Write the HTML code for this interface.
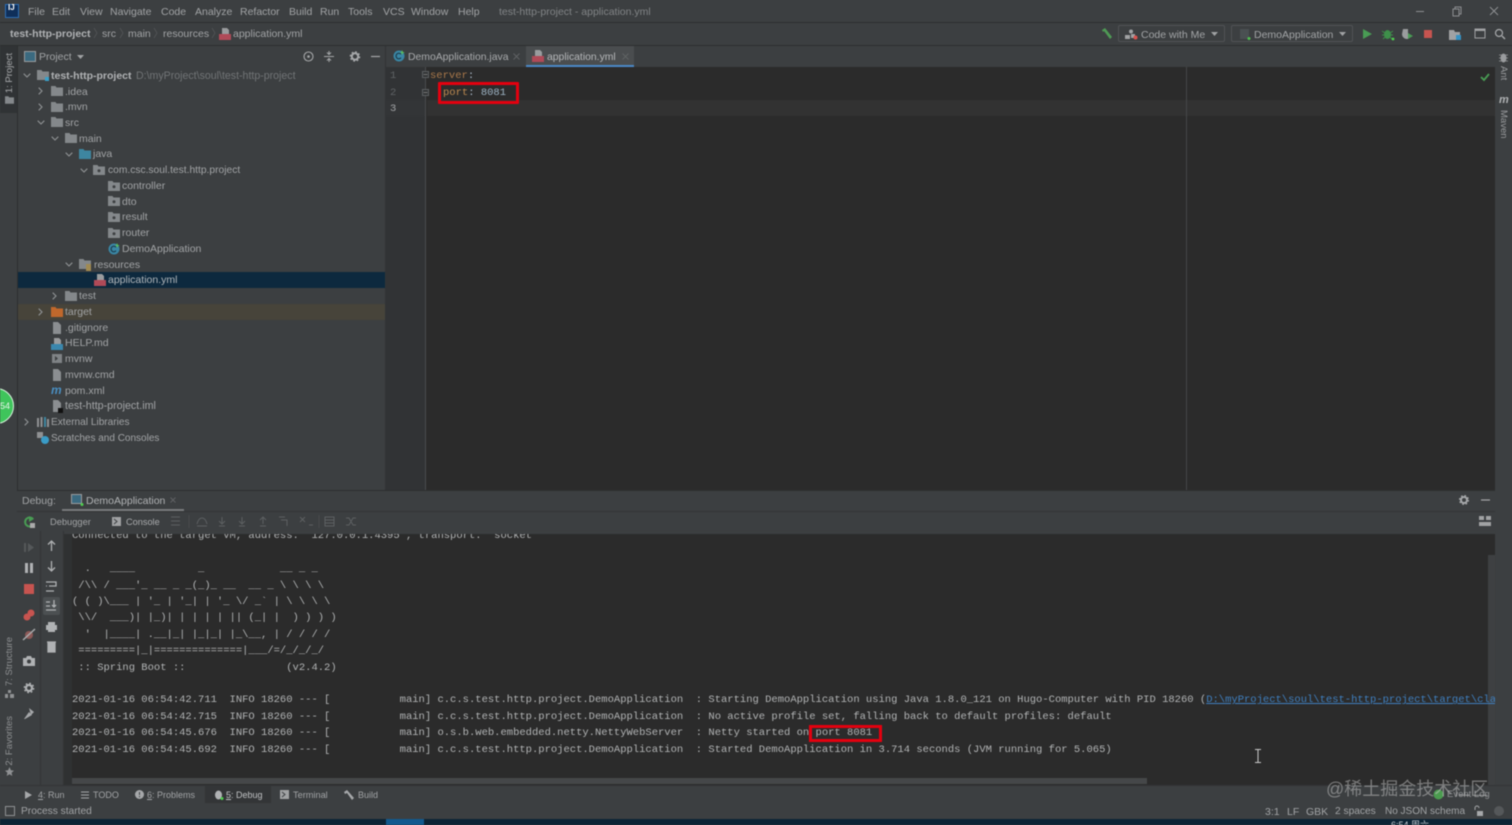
<!DOCTYPE html>
<html><head><meta charset="utf-8"><style>
html,body{margin:0;padding:0;width:1512px;height:825px;overflow:hidden;background:#3c3f41}
body{position:relative;font:10.5px/16px "Liberation Sans","Noto Sans CJK SC",sans-serif;color:#a2a4a6}
#w{position:absolute;left:0;top:0;width:1512px;height:825px;overflow:hidden;filter:blur(.4px)}
.a,.t{position:absolute}
.t{white-space:pre;margin-top:1px}
.v{position:absolute;writing-mode:vertical-rl;transform:rotate(180deg);white-space:pre;line-height:14px;font-size:9.5px}
.m{font-family:"Liberation Mono",monospace}
.b{font-size:9px}
svg{position:absolute;overflow:visible}
.ln{position:absolute;background:#2d2f30}
</style></head><body><div id="w">
<svg width="0" height="0" style="position:absolute"><defs>
<symbol id="f" viewBox="0 0 12 10"><path d="M0 0h4.500l1 1.500H12V10H0z" fill="#84888b"/></symbol>
<symbol id="p" viewBox="0 0 12 10"><path d="M0 0h4.500l1 1.500H12V10H0z" fill="#84888b"/><circle cx="6" cy="5.700" r="1.500" fill="#3c3f41"/></symbol>
<symbol id="o" viewBox="0 0 8 5"><path d="M.7.7 4 4 7.300.7" fill="none" stroke="#8f9294" stroke-width="1.100"/></symbol>
<symbol id="c" viewBox="0 0 5 8"><path d="M.7.7 4 4 .7 7.300" fill="none" stroke="#8f9294" stroke-width="1.100"/></symbol>
<symbol id="d" viewBox="0 0 10 12"><path d="M1 0h5l3 3v9H1z" fill="#8b8e91"/></symbol>
<symbol id="y" viewBox="0 0 12 12"><path d="M3 0h5l2 2v4H3z" fill="#9a9c9e"/><rect y="6" width="12" height="6" fill="#b04a58"/></symbol>
<symbol id="j" viewBox="0 0 12 12"><circle cx="6" cy="6" r="5.500" fill="#3a87a5"/><path d="M8 4.200A2.800 2.800 0 1 0 8 7.800" fill="none" stroke="#1d3c4c" stroke-width="1.200"/><path d="M9 0l1 2 2 .5-2 .5-1 2-.5-2-2-.5 2-.5z" fill="#5bc25b"/></symbol>
</defs></svg>

<!-- title bar -->
<div class="ln" style="left:0;top:22px;width:1512px;height:1px"></div>
<div class="a" style="left:5px;top:4px;width:14px;height:14px;background:#0f2f5a;border:1px solid #2d6fb7;box-sizing:border-box"></div>
<div class="t" style="left:8px;top:1px;font:bold 8px/12px 'Liberation Sans',sans-serif;color:#fff">IJ</div>
<div class="t" style="left:28px;top:3px">File</div><div class="t" style="left:52px;top:3px">Edit</div><div class="t" style="left:80px;top:3px">View</div><div class="t" style="left:110px;top:3px">Navigate</div><div class="t" style="left:161px;top:3px">Code</div><div class="t" style="left:195px;top:3px">Analyze</div><div class="t" style="left:240px;top:3px">Refactor</div><div class="t" style="left:289px;top:3px">Build</div><div class="t" style="left:320px;top:3px">Run</div><div class="t" style="left:348px;top:3px">Tools</div><div class="t" style="left:383px;top:3px">VCS</div><div class="t" style="left:411px;top:3px">Window</div><div class="t" style="left:458px;top:3px">Help</div>
<div class="t" style="left:499px;top:3px;color:#818486">test-http-project - application.yml</div>
<svg style="left:1416px;top:6px" width="90" height="11"><path d="M0 5.500h8" stroke="#8d8f91"/><path d="M37 3h6v7h-6zM39 3V1h6v7h-2" fill="none" stroke="#8d8f91"/><path d="M74 1l8 8M82 1l-8 8" stroke="#8d8f91"/></svg>

<!-- breadcrumb -->
<div class="t" style="left:10px;top:25px;font-weight:bold;color:#b0b2b4">test-http-project</div>
<div class="t" style="left:102px;top:25px">src</div><div class="t" style="left:128px;top:25px">main</div><div class="t" style="left:163px;top:25px">resources</div>
<svg style="left:219px;top:28px" width="12" height="12"><use href="#y"/></svg>
<div class="t" style="left:233px;top:25px">application.yml</div>
<svg style="left:94px;top:28px" width="100" height="11"><path d="M0 0l3 5-3 5M26 0l3 5-3 5M60 0l3 5-3 5M118 0l3 5-3 5" fill="none" stroke="#505355"/></svg>
<svg style="left:1101px;top:28px" width="12" height="12"><path d="M1 2l3-2 7 9-2 2-6-8-1 1z" fill="#4f9a55"/></svg>
<div class="a" style="left:1118px;top:25px;width:107px;height:17px;border:1px solid #505355;border-radius:2px;box-sizing:border-box"></div>
<div class="a" style="left:1231px;top:25px;width:122px;height:17px;border:1px solid #505355;border-radius:2px;box-sizing:border-box"></div>
<svg style="left:1125px;top:29px" width="13" height="11"><circle cx="6" cy="2.500" r="2" fill="#a0a2a4"/><rect x="0" y="6" width="5" height="4" fill="#a0a2a4"/><rect x="6" y="5" width="4" height="4" fill="#a0a2a4"/><circle cx="10.500" cy="8.500" r="2" fill="#d9534f"/></svg>
<div class="t" style="left:1141px;top:26px">Code with Me</div>
<svg style="left:1211px;top:32px" width="7" height="4"><path d="M0 0h7L3.500 4z" fill="#a0a2a4"/></svg>
<svg style="left:1239px;top:28px" width="12" height="12"><rect x="1" y="1" width="9" height="10" fill="#4a5052"/><circle cx="10" cy="10.500" r="1.500" fill="#4fc04f"/></svg>
<div class="t" style="left:1254px;top:26px">DemoApplication</div>
<svg style="left:1339px;top:32px" width="7" height="4"><path d="M0 0h7L3.500 4z" fill="#a0a2a4"/></svg>
<svg style="left:1362px;top:28px" width="146" height="13"><path d="M1 1l9 5-9 5z" fill="#499c54"/><ellipse cx="25.500" cy="6.500" rx="3.500" ry="4.500" fill="#3e8f4a"/><path d="M20 3l3 2M31 3l-3 2M20 7h3M31 7h-3M21 11l2-2M30 11l-2-2" stroke="#3e8f4a"/><circle cx="31" cy="11" r="1.400" fill="#4fd04f"/><path d="M41 1h5v10h-2c-3-1-4-3-4-5z" fill="#9a9c9e"/><path d="M46 5l5 3-5 3z" fill="#499c54"/><rect x="62" y="2" width="8" height="8" fill="#c75450"/><path d="M87 2h5l1 2h5v8H87z" fill="#a0a2a4"/><rect x="94" y="7" width="5" height="5" fill="#3592c4"/><rect x="113" y="1" width="10" height="9" fill="none" stroke="#a0a2a4"/><rect x="113" y="1" width="10" height="2" fill="#a0a2a4"/><circle cx="137" cy="5" r="3.500" fill="none" stroke="#a8aaac" stroke-width="1.200"/><path d="M140 8l3 3" stroke="#a8aaac" stroke-width="1.400"/></svg>
<div class="ln" style="left:0;top:45px;width:1512px;height:1px"></div>

<!-- left stripe -->
<div class="a" style="left:0;top:46px;width:17px;height:67px;background:#303335"></div>
<div class="v" style="left:3px;top:53px;color:#a9abad">1: Project</div>
<svg style="left:5px;top:96px" width="9" height="8"><use href="#f"/></svg>
<div class="v" style="left:3px;top:637px;color:#8f9193">7: Structure</div>
<svg style="left:5px;top:690px" width="9" height="8"><path d="M3 0h3v3H3zM0 4h3v4H0zM5 4h4v4H5z" fill="#8f9193"/></svg>
<div class="v" style="left:3px;top:716px;color:#8f9193">2: Favorites</div>
<svg style="left:5px;top:767px" width="9" height="9"><path d="M4.500 0l1.400 3.200 3.100.4-2.400 2.100.7 3.300-2.800-1.800-2.800 1.800.7-3.300L0 3.600l3.100-.4z" fill="#8f9193"/></svg>
<div class="a" style="left:-22px;top:388px;width:36px;height:36px;border-radius:50%;background:#3fc45b;border:1px solid #d7f3dc;box-sizing:border-box"></div>
<div class="t" style="left:0;top:397px;color:#e6f5e8;font-size:9px">54</div>

<!-- project header -->
<div class="ln" style="left:17px;top:45px;width:1px;height:445px"></div>
<svg style="left:24px;top:51px" width="12" height="11"><rect x=".5" y=".5" width="11" height="10" fill="#3b6a80" stroke="#9a9c9e"/></svg>
<div class="t" style="left:39px;top:48px">Project</div>
<svg style="left:77px;top:55px" width="7" height="4"><path d="M0 0h7L3.500 4z" fill="#a0a2a4"/></svg>
<svg style="left:303px;top:51px" width="78" height="11"><circle cx="5.500" cy="5.500" r="4.500" fill="none" stroke="#a6a8aa" stroke-width="1.100"/><circle cx="5.500" cy="5.500" r="1.300" fill="#a6a8aa"/><path d="M21 5.500h10M26 0v3M24 1.500l2 2 2-2M26 11V8M24 9.500l2-2 2 2" fill="none" stroke="#a6a8aa"/><circle cx="52" cy="5.500" r="3.200" fill="none" stroke="#a6a8aa" stroke-width="2"/><circle cx="52" cy="5.500" r="4.600" fill="none" stroke="#a6a8aa" stroke-width="1.400" stroke-dasharray="1.800 1.800"/><path d="M68 5.500h9" stroke="#a6a8aa" stroke-width="1.200"/></svg>

<!-- tree -->
<div class="a" style="left:18px;top:272px;width:367px;height:16px;background:#0d293e"></div>
<div class="a" style="left:18px;top:304px;width:367px;height:16px;background:#47443a"></div>
<div class="a" style="left:385px;top:46px;width:1px;height:444px;background:#323436"></div>

<svg style="left:23px;top:73px" width="8" height="5"><use href="#o"/></svg>
<svg style="left:37px;top:70px" width="12" height="10"><use href="#f"/></svg><div class="a" style="left:45px;top:77px;width:4px;height:4px;background:#3aa0c9"></div>
<div class="t" style="left:51px;top:67px;font-weight:bold;color:#b0b2b4">test-http-project</div>
<div class="t" style="left:136px;top:67px;color:#717476;font-size:10.6px">D:\myProject\soul\test-http-project</div>

<svg style="left:38px;top:87px" width="5" height="8"><use href="#c"/></svg><svg style="left:51px;top:86px" width="12" height="10"><use href="#f"/></svg><div class="t" style="left:65px;top:83px">.idea</div>
<svg style="left:38px;top:103px" width="5" height="8"><use href="#c"/></svg><svg style="left:51px;top:102px" width="12" height="10"><use href="#f"/></svg><div class="t" style="left:65px;top:98px">.mvn</div>
<svg style="left:37px;top:120px" width="8" height="5"><use href="#o"/></svg><svg style="left:51px;top:117px" width="12" height="10"><use href="#f"/></svg><div class="t" style="left:65px;top:114px">src</div>
<svg style="left:51px;top:136px" width="8" height="5"><use href="#o"/></svg><svg style="left:65px;top:133px" width="12" height="10"><use href="#f"/></svg><div class="t" style="left:79px;top:130px">main</div>
<svg style="left:65px;top:152px" width="8" height="5"><use href="#o"/></svg><svg style="left:79px;top:149px" width="12" height="10"><path d="M0 0h4.500l1 1.500H12V10H0z" fill="#3e86a0"/></svg><div class="t" style="left:93px;top:145px">java</div>
<svg style="left:80px;top:168px" width="8" height="5"><use href="#o"/></svg><svg style="left:93px;top:165px" width="12" height="10"><use href="#p"/></svg><div class="t" style="left:108px;top:162px;font-size:10.25px">com.csc.soul.test.http.project</div>
<svg style="left:108px;top:181px" width="12" height="10"><use href="#p"/></svg><div class="t" style="left:122px;top:177px">controller</div>
<svg style="left:108px;top:196px" width="12" height="10"><use href="#p"/></svg><div class="t" style="left:122px;top:193px">dto</div>
<svg style="left:108px;top:212px" width="12" height="10"><use href="#p"/></svg><div class="t" style="left:122px;top:208px">result</div>
<svg style="left:108px;top:228px" width="12" height="10"><use href="#p"/></svg><div class="t" style="left:122px;top:224px">router</div>
<svg style="left:108px;top:243px" width="12" height="12"><use href="#j"/></svg><div class="t" style="left:122px;top:240px">DemoApplication</div>
<svg style="left:65px;top:262px" width="8" height="5"><use href="#o"/></svg><svg style="left:79px;top:259px" width="12" height="10"><use href="#f"/></svg><div class="a" style="left:86px;top:264px;width:5px;height:7px;background:#a08a52"></div><div class="t" style="left:94px;top:256px">resources</div>
<svg style="left:94px;top:274px" width="12" height="12"><use href="#y"/></svg><div class="t" style="left:108px;top:271px;color:#b0b6ba">application.yml</div>
<svg style="left:52px;top:292px" width="5" height="8"><use href="#c"/></svg><svg style="left:65px;top:291px" width="12" height="10"><use href="#f"/></svg><div class="t" style="left:79px;top:287px">test</div>
<svg style="left:38px;top:308px" width="5" height="8"><use href="#c"/></svg><svg style="left:51px;top:307px" width="12" height="10"><path d="M0 0h4.500l1 1.500H12V10H0z" fill="#c0682c"/></svg><div class="t" style="left:65px;top:303px">target</div>
<svg style="left:52px;top:322px" width="10" height="12"><use href="#d"/></svg><div class="t" style="left:65px;top:319px">.gitignore</div>
<svg style="left:51px;top:338px" width="12" height="12"><path d="M3 0h5l2 2v4H3z" fill="#9a9c9e"/><rect y="6" width="12" height="6" fill="#3b87ad"/></svg><div class="t" style="left:65px;top:334px">HELP.md</div>
<svg style="left:52px;top:354px" width="10" height="10"><rect width="10" height="9" fill="#7f8386"/><path d="M3 2l3 2.500-3 2.500z" fill="#3c3f41"/></svg><div class="t" style="left:65px;top:350px">mvnw</div>
<svg style="left:52px;top:369px" width="10" height="12"><use href="#d"/></svg><div class="t" style="left:65px;top:366px">mvnw.cmd</div>
<div class="t" style="left:51px;top:381px;font:italic bold 12px/16px 'Liberation Sans',sans-serif;color:#4a8fc2">m</div><div class="t" style="left:65px;top:382px">pom.xml</div>
<svg style="left:52px;top:400px" width="10" height="12"><use href="#d"/></svg><div class="a" style="left:58px;top:408px;width:5px;height:5px;background:#111"></div><div class="t" style="left:65px;top:397px;font-size:10.7px">test-http-project.iml</div>
<svg style="left:24px;top:418px" width="5" height="8"><use href="#c"/></svg><svg style="left:37px;top:417px" width="12" height="10"><path d="M0 1h2v9H0zM3.500 0h2v10h-2z" fill="#8f9193"/><path d="M7 0h2v10H7z" fill="#3e86a0"/><path d="M10 2h2v8h-2z" fill="#8f9193"/></svg><div class="t" style="left:51px;top:414px;font-size:10.1px">External Libraries</div>
<svg style="left:37px;top:432px" width="12" height="12"><path d="M0 0h6v6H0z" fill="#8f9193"/><circle cx="8" cy="8" r="4" fill="#3a9cc7"/></svg><div class="t" style="left:51px;top:430px;font-size:10px">Scratches and Consoles</div>

<!-- editor tabs -->
<svg style="left:393px;top:50px" width="12" height="12"><use href="#j"/></svg>
<div class="t" style="left:408px;top:49px;color:#a9abad;font-size:10.4px">DemoApplication.java</div>
<svg style="left:513px;top:53px" width="7" height="7"><path d="M.5.500l6 6M6.500.500l-6 6" stroke="#5f6264"/></svg>
<div class="a" style="left:526px;top:46px;width:108px;height:21px;background:#4a4d4f;border-bottom:2px solid #4a88c7;box-sizing:border-box"></div>
<svg style="left:532px;top:50px" width="12" height="12"><use href="#y"/></svg>
<div class="t" style="left:547px;top:49px;color:#b5b7b9;font-size:10.4px">application.yml</div>
<svg style="left:622px;top:53px" width="7" height="7"><path d="M.5.500l6 6M6.500.500l-6 6" stroke="#5f6264"/></svg>

<!-- editor -->
<div class="a" style="left:386px;top:67px;width:40px;height:423px;background:#313335"></div>
<div class="a" style="left:426px;top:67px;width:1069px;height:423px;background:#2b2b2b"></div>
<div class="a" style="left:386px;top:100px;width:40px;height:16px;background:#333537"></div>
<div class="a" style="left:427px;top:100px;width:1068px;height:16px;background:#323232"></div>
<div class="a" style="left:425px;top:67px;width:1px;height:423px;background:#4a4c4e"></div>
<div class="a" style="left:1186px;top:67px;width:1px;height:423px;background:#454749"></div>
<div class="t m" style="left:390px;top:67px;color:#5f6365">1</div>
<div class="t m" style="left:390px;top:84px;color:#5f6365">2</div>
<div class="t m" style="left:390px;top:100px;color:#a4a6a8">3</div>
<svg style="left:422px;top:71px" width="7" height="25"><rect x=".5" y=".5" width="6" height="6" fill="#313335" stroke="#5c5f61"/><path d="M1.500 3.500h4" stroke="#777"/><rect x=".5" y="18.500" width="6" height="6" fill="#313335" stroke="#5c5f61"/><path d="M1.500 21.500h4" stroke="#777"/></svg>
<div class="t m" style="left:430px;top:67px;color:#a9784a">server<span style="color:#a9b7c6">:</span></div>
<div class="t m" style="left:443px;top:84px;color:#bd8a50">port<span style="color:#a9b7c6">: </span><span style="color:#9db3c4">8081</span></div>
<div class="a" style="left:438px;top:82px;width:81px;height:22px;border:3px solid #e4000f;border-radius:1px;box-sizing:border-box"></div>
<svg style="left:1480px;top:73px" width="10" height="8"><path d="M1 4l3 3 5-6" fill="none" stroke="#499c54" stroke-width="1.800"/></svg>

<!-- right stripe -->
<svg style="left:1499px;top:52px" width="9" height="11"><ellipse cx="4.500" cy="6" rx="3" ry="4.500" fill="#9a9c9e"/><path d="M0 3h9M0 6h9M0 9h9" stroke="#9a9c9e" stroke-width=".8"/></svg>
<div class="v" style="left:1496px;top:66px;transform:none;color:#9a9c9e">Ant</div>
<div class="t" style="left:1499px;top:92px;font:italic bold 11px/14px 'Liberation Sans',sans-serif;color:#b0b2b4">m</div>
<div class="v" style="left:1496px;top:110px;transform:none;color:#9a9c9e">Maven</div>

<!-- debug header -->
<div class="ln" style="left:17px;top:490px;width:1478px;height:1px"></div>
<div class="t" style="left:22px;top:492px">Debug:</div>
<svg style="left:71px;top:494px" width="13" height="12"><rect x=".5" y=".5" width="10" height="9" fill="#3b6a80" stroke="#9a9c9e"/><circle cx="11" cy="10.500" r="1.500" fill="#4fd04f"/></svg>
<div class="t" style="left:86px;top:492px;color:#b0b2b4">DemoApplication</div>
<svg style="left:170px;top:497px" width="6" height="6"><path d="M.5.500l5 5M5.500.500l-5 5" stroke="#5f6264"/></svg>
<div class="a" style="left:62px;top:509px;width:122px;height:2px;background:#787b7d"></div>
<svg style="left:1459px;top:495px" width="34" height="10"><circle cx="5" cy="5" r="3" fill="none" stroke="#a6a8aa" stroke-width="2"/><circle cx="5" cy="5" r="4.400" fill="none" stroke="#a6a8aa" stroke-width="1.300" stroke-dasharray="1.700 1.800"/><path d="M22 5h9" stroke="#a6a8aa" stroke-width="1.200"/></svg>
<div class="ln" style="left:17px;top:511px;width:1478px;height:1px;background:#333537"></div>

<!-- debug toolbar -->
<svg style="left:23px;top:516px" width="12" height="12"><path d="M10 3A4.500 4.500 0 1 0 10 9" fill="none" stroke="#499c54" stroke-width="2"/><path d="M6 0v6l5-3z" fill="#499c54"/><rect x="7" y="7" width="5" height="5" fill="#aaa"/></svg>
<div class="t" style="left:50px;top:513px;font-size:9.3px">Debugger</div>
<svg style="left:112px;top:517px" width="9" height="9"><rect width="9" height="9" fill="#a0a2a4"/><path d="M2 2l3 2.500-3 2.500" fill="none" stroke="#3c3f41"/></svg>
<div class="t" style="left:126px;top:513px;color:#a9abad;font-size:9.2px">Console</div>
<svg style="left:171px;top:516px" width="190" height="11" stroke="#5d6062" fill="none"><path d="M0 1h9M0 5h9M0 9h9"/><path d="M18-1v13" stroke="#4a4c4e"/><path d="M26 8c1-4 3-6 5-6s4 2 5 6M26 10h10M51 1v6M48 5l3 3 3-3M48 10h6M71 1v6M68 5l3 3 3-3M68 10h6M92 8V2M89 4l3-3 3 3M89 10h6M110 4h6v6M114 1h-6M129 1l5 5M134 1l-5 5M138 9h4"/><path d="M148-1v13" stroke="#4a4c4e"/><rect x="154" y="1" width="9" height="9"/><path d="M154 4h9M154 7h9M175 2h3l4 7h3M175 9h3l4-7h3"/></svg>
<svg style="left:1479px;top:516px" width="12" height="10"><path d="M0 0h5v4H0zM7 0h5v4H7zM0 6h12v4H0z" fill="#a0a2a4"/></svg>

<!-- left debug bars -->
<div class="ln" style="left:40px;top:531px;width:1px;height:254px;background:#333537"></div>
<div class="ln" style="left:63px;top:531px;width:1px;height:254px;background:#323436"></div>
<svg style="left:22px;top:541px" width="14" height="180"><path d="M2 2h2v9H2z" fill="#55585a"/><path d="M6 2l6 4.500L6 11z" fill="#55585a"/><path d="M3 22h3v10H3zM8 22h3v10H8z" fill="#b0b2b4"/><rect x="2" y="43" width="10" height="10" fill="#c75450"/><circle cx="5" cy="76" r="3.500" fill="#c75450"/><circle cx="9" cy="72" r="3.500" fill="#c75450"/><circle cx="7" cy="94" r="4" fill="#8d5a58"/><path d="M1 99L13 88" stroke="#a9abad" stroke-width="1.500"/><path d="M1 117h3l1-2h4l1 2h3v8H1z" fill="#b0b2b4"/><circle cx="7" cy="120.500" r="2" fill="#3c3f41"/><circle cx="7" cy="147" r="3" fill="none" stroke="#b0b2b4" stroke-width="2.200"/><circle cx="7" cy="147" r="4.700" fill="none" stroke="#b0b2b4" stroke-width="1.300" stroke-dasharray="1.800 1.900"/><path d="M2 178l5-7 3 3-7 4" fill="#a6a8aa"/><path d="M7 167l5 4-3 3z" fill="#a6a8aa"/></svg>
<div class="a" style="left:43px;top:597px;width:17px;height:18px;background:#4c5052;border-radius:2px"></div>
<svg style="left:46px;top:540px" width="11" height="115" fill="none" stroke="#b0b2b4" stroke-width="1.300"><path d="M5.500 11V1M2 4.500L5.500 1 9 4.500M5.500 21v10M2 27.500L5.500 31 9 27.500M0 42h10v4H3M0 46h1M0 51h8M0 62h4M0 66h4M8 60v7M6 65l2 2 2-2M0 70h10"/><path d="M0 85h11v5H0zM2 82h7v3H2zM2 90h7v2H2z" fill="#b0b2b4" stroke="none"/><path d="M2 103h7v9H2zM1 102h9" fill="#b0b2b4"/></svg>

<!-- console -->
<div class="a" style="left:64px;top:531px;width:1431px;height:254px;background:#2b2b2b;overflow:hidden">
<div class="a" style="left:1424px;top:24px;width:7px;height:230px;background:#3e4042"></div>
<pre class="a m" style="left:8px;top:-2.600px;margin:0;font-size:10.5px;line-height:16.4px;color:#b2b4b5">Connected to the target VM, address: '127.0.0.1:4395', transport: 'socket'

  .   ____          _            __ _ _
 /\\ / ___'_ __ _ _(_)_ __  __ _ \ \ \ \
( ( )\___ | '_ | '_| | '_ \/ _` | \ \ \ \
 \\/  ___)| |_)| | | | | || (_| |  ) ) ) )
  '  |____| .__|_| |_|_| |_\__, | / / / /
 =========|_|==============|___/=/_/_/_/
 :: Spring Boot ::                (v2.4.2)

2021-01-16 06:54:42.711  INFO 18260 --- [           main] c.c.s.test.http.project.DemoApplication  : Starting DemoApplication using Java 1.8.0_121 on Hugo-Computer with PID 18260 (<span style="color:#3f7fbf;text-decoration:underline">D:\myProject\soul\test-http-project\target\cla</span>
2021-01-16 06:54:42.715  INFO 18260 --- [           main] c.c.s.test.http.project.DemoApplication  : No active profile set, falling back to default profiles: default
2021-01-16 06:54:45.676  INFO 18260 --- [           main] o.s.b.web.embedded.netty.NettyWebServer  : Netty started on port 8081
2021-01-16 06:54:45.692  INFO 18260 --- [           main] c.c.s.test.http.project.DemoApplication  : Started DemoApplication in 3.714 seconds (JVM running for 5.065)</pre>
<div class="a" style="left:0;top:0;width:8px;height:254px;background:#2f3132"></div>
<div class="a" style="left:0;top:0;width:1431px;height:2.500px;background:#3c3f41"></div>
<div class="a" style="left:8px;top:247px;width:1075px;height:6px;background:#454749"></div>
</div>
<div class="a" style="left:809px;top:725px;width:73px;height:17px;border:3px solid #e4000f;box-sizing:border-box"></div>
<svg style="left:1254px;top:749px" width="8" height="14"><path d="M1 .5h6M1 13.500h6M4 .5v13" stroke="#c8c8c8"/></svg>

<!-- bottom tool bar -->
<div class="ln" style="left:0;top:785px;width:1512px;height:1px;background:#333537"></div>
<div class="a" style="left:205px;top:786px;width:66px;height:17px;background:#333537"></div>
<svg style="left:25px;top:791px" width="7" height="8"><path d="M0 0l7 4-7 4z" fill="#a6a8aa"/></svg>
<div class="t b" style="left:38px;top:786px"><u>4</u>: Run</div>
<svg style="left:81px;top:791px" width="8" height="8"><path d="M0 1h8M0 4h8M0 7h8" stroke="#a6a8aa"/></svg>
<div class="t b" style="left:93px;top:786px">TODO</div>
<svg style="left:135px;top:790px" width="9" height="9"><circle cx="4.500" cy="4.500" r="4.500" fill="#a6a8aa"/><path d="M4.500 2v3M4.500 6v1.200" stroke="#3c3f41"/></svg>
<div class="t b" style="left:147px;top:786px"><u>6</u>: Problems</div>
<svg style="left:214px;top:790px" width="10" height="10"><ellipse cx="4.500" cy="5" rx="3.500" ry="4.500" fill="#b0b2b4"/><circle cx="8" cy="8.500" r="1.500" fill="#4fd04f"/></svg>
<div class="t b" style="left:226px;top:786px;color:#c0c2c4"><u>5</u>: Debug</div>
<svg style="left:280px;top:790px" width="9" height="9"><rect width="9" height="9" fill="#a0a2a4"/><path d="M2 2l3 2.500-3 2.500" fill="none" stroke="#3c3f41"/></svg>
<div class="t b" style="left:293px;top:786px;font-size:9.2px">Terminal</div>
<svg style="left:344px;top:790px" width="11" height="10"><path d="M0 2l3-2 7 8-2 2-5-7-2 1z" fill="#a6a8aa"/></svg>
<div class="t b" style="left:358px;top:786px">Build</div>
<svg style="left:1433px;top:789px" width="11" height="11"><circle cx="5.500" cy="5.500" r="5" fill="#4b9c4f"/></svg>
<div class="t" style="left:1447px;top:786px;font-size:9.5px;color:#8f9193">Event Log</div>

<!-- status -->
<svg style="left:5px;top:806px" width="10" height="10"><rect x=".5" y=".5" width="9" height="9" fill="none" stroke="#8f9193"/></svg>
<div class="t" style="left:21px;top:803px;font-size:10.2px">Process started</div>
<div class="t" style="left:1265px;top:803px">3:1</div><div class="t" style="left:1287px;top:803px">LF</div><div class="t" style="left:1306px;top:803px">GBK</div><div class="t" style="left:1335px;top:803px;font-size:10.2px">2 spaces</div><div class="t" style="left:1385px;top:803px;font-size:10px">No JSON schema</div>
<svg style="left:1474px;top:806px" width="10" height="10"><path d="M1 4V2a2 2 0 0 1 4 0" fill="none" stroke="#a6a8aa"/><rect x="3" y="5" width="6" height="5" fill="#a6a8aa"/></svg>
<svg style="left:1494px;top:806px" width="10" height="10"><circle cx="5" cy="5" r="5" fill="#55585a"/></svg>

<!-- watermark -->
<div class="t" style="left:1326px;top:777px;font:18px/22px 'Liberation Sans','Noto Sans CJK SC',sans-serif;color:rgba(200,200,200,.5)">@稀土掘金技术社区</div>

<!-- taskbar -->
<div class="a" style="left:0;top:819px;width:1512px;height:6px;background:#0c2436"></div>
<div class="a" style="left:386px;top:819px;width:38px;height:6px;background:#12598f"></div>
<div class="t" style="left:1391px;top:818px;font-size:9px;line-height:12px;color:#c8d0d6">6:54 周六</div>
</div></body></html>
